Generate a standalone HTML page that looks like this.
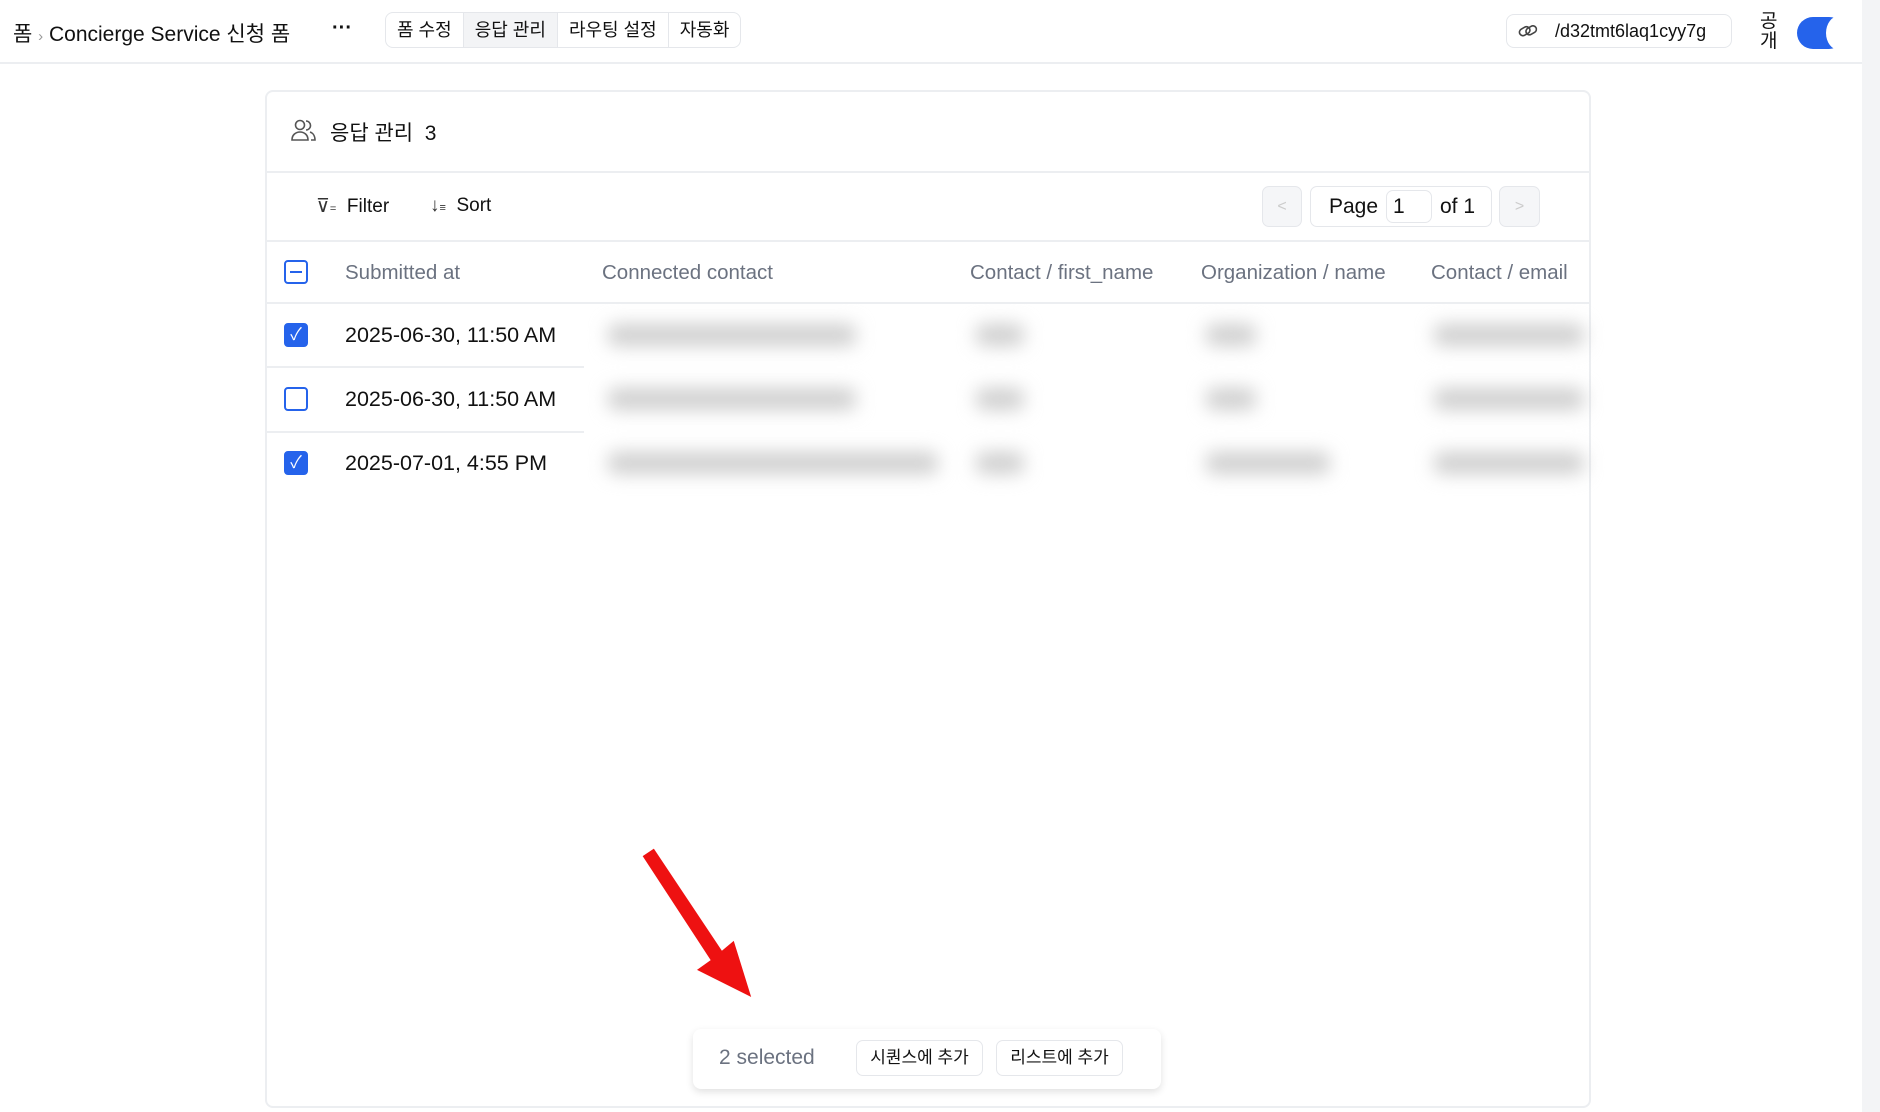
<!DOCTYPE html>
<html><head><meta charset="utf-8"><style>
*{box-sizing:border-box;margin:0;padding:0}
body{width:1880px;height:1112px;overflow:hidden;background:#fff;font-family:"Liberation Sans","Noto Sans CJK KR",sans-serif;color:#111;position:relative}
.abs{position:absolute}
.hdr{left:0;top:0;width:1862px;height:64px;border-bottom:2px solid #eceef1}
.rt{left:1862px;top:0;width:18px;height:1112px;background:#f3f4f6}
.tabs{left:385px;top:12px;height:36px;border:1px solid #e5e7eb;border-radius:8px;display:flex;overflow:hidden;font-size:18px}
.tabs div{padding:0 11px;line-height:34px;border-right:1px solid #e5e7eb}
.tabs div:last-child{border-right:none}
.card{left:265px;top:90px;width:1326px;height:1018px;border:2px solid #eceef1;border-radius:8px}
.hl{height:2px;background:#eceef1}
.th{font-size:20.5px;color:#6b7280;top:261px}
.td{font-size:21.5px;color:#111;left:345px}
.cb{width:24px;height:24px;border:2px solid #2563eb;border-radius:4px;left:284px}
.cbon{background:#2563eb;color:#fff;font-size:17px;text-align:center;line-height:20px}
.blur{background:#cfcfcf;filter:blur(9px);border-radius:8px;height:22px}
.btn{border:1px solid #e5e7eb;border-radius:7px;font-size:17px;text-align:center;line-height:34px;height:36px}
</style></head><body>
<div class="abs hdr"></div>
<div class="abs rt"></div>
<div class="abs" style="left:13px;top:18px;font-size:21px">폼 <span style="color:#999;font-size:15px">›</span> Concierge Service 신청 폼</div>
<div class="abs" style="left:332px;top:17px;font-size:20px;font-weight:bold">···</div>
<div class="abs tabs"><div>폼 수정</div><div style="background:#f3f4f6">응답 관리</div><div>라우팅 설정</div><div>자동화</div></div>
<div class="abs" style="left:1506px;top:14px;width:226px;height:34px;border:1px solid #e5e7eb;border-radius:8px;font-size:18px;line-height:32px;padding-left:48px">/d32tmt6laq1cyy7g</div>
<svg class="abs" style="left:1517px;top:21px" width="22" height="20" viewBox="0 0 22 20" fill="none" stroke="#444" stroke-width="1.6"><rect x="2" y="7" width="11" height="7" rx="3.5" transform="rotate(-30 7 10)"/><rect x="9" y="6" width="11" height="7" rx="3.5" transform="rotate(-30 14 10)"/></svg>
<div class="abs" style="left:1760px;top:12px;font-size:19px;line-height:20px;width:20px">공<br>개</div>
<div class="abs" style="left:1797px;top:17px;width:48px;height:32px;border-radius:16px;background:#2563eb"></div>
<div class="abs" style="left:1826px;top:16px;width:26px;height:34px;border-radius:50%;background:#fff"></div>

<div class="abs card"></div>
<svg class="abs" style="left:290px;top:118px" width="28" height="24" viewBox="0 0 28 24" fill="none" stroke="#555" stroke-width="1.6"><circle cx="10" cy="7" r="4.5"/><path d="M2 22c0-5 3.5-8 8-8s8 3 8 8z"/><path d="M16 3a4.5 4.5 0 0 1 0 9M20 14c3 1 5 4 5 8h-4"/></svg>
<div class="abs" style="left:330px;top:117px;font-size:21px">응답 관리&nbsp; 3</div>
<div class="abs hl" style="left:267px;top:171px;width:1322px"></div>
<div class="abs" style="left:316px;top:195px;font-size:19px;color:#333">⊽<span style="font-size:11px">=</span>&nbsp; <span style="color:#111">Filter</span></div>
<div class="abs" style="left:430px;top:195px;font-size:19px;color:#333">↓<span style="font-size:11px">≡</span>&nbsp; <span style="color:#111">Sort</span></div>
<div class="abs" style="left:1262px;top:186px;width:40px;height:41px;border:1px solid #e5e7eb;border-radius:7px;background:#f5f6f8;color:#ccc;text-align:center;line-height:39px">&lt;</div>
<div class="abs" style="left:1310px;top:186px;width:182px;height:41px;border:1px solid #e5e7eb;border-radius:7px;font-size:21px;line-height:39px;padding-left:18px">Page</div>
<div class="abs" style="left:1386px;top:190px;width:46px;height:33px;border:1px solid #e5e7eb;border-radius:7px;font-size:21px;line-height:31px;padding-left:6px">1</div>
<div class="abs" style="left:1440px;top:195px;font-size:21px">of 1</div>
<div class="abs" style="left:1499px;top:186px;width:41px;height:41px;border:1px solid #e5e7eb;border-radius:7px;background:#f5f6f8;color:#ccc;text-align:center;line-height:39px">&gt;</div>
<div class="abs hl" style="left:267px;top:240px;width:1322px"></div>

<div class="abs cb" style="top:260px"><div style="width:12px;height:2px;background:#2563eb;margin:9px auto"></div></div>
<div class="abs th" style="left:345px">Submitted at</div>
<div class="abs th" style="left:602px">Connected contact</div>
<div class="abs th" style="left:970px">Contact / first_name</div>
<div class="abs th" style="left:1201px">Organization / name</div>
<div class="abs th" style="left:1431px">Contact / email</div>
<div class="abs hl" style="left:267px;top:302px;width:1322px"></div>

<div class="abs cb cbon" style="top:323px">✓</div>
<div class="abs td" style="top:323px">2025-06-30, 11:50 AM</div>
<div class="abs" style="left:267px;top:366px;width:317px;height:2px;background:#eceef1"></div>
<div class="abs cb" style="top:387px"></div>
<div class="abs td" style="top:387px">2025-06-30, 11:50 AM</div>
<div class="abs" style="left:267px;top:431px;width:317px;height:2px;background:#eceef1"></div>
<div class="abs cb cbon" style="top:451px">✓</div>
<div class="abs td" style="top:451px">2025-07-01, 4:55 PM</div>

<div class="abs blur" style="left:608px;top:324px;width:248px"></div>
<div class="abs blur" style="left:976px;top:324px;width:48px"></div>
<div class="abs blur" style="left:1206px;top:324px;width:50px"></div>
<div class="abs blur" style="left:1434px;top:324px;width:150px"></div>
<div class="abs blur" style="left:608px;top:388px;width:248px"></div>
<div class="abs blur" style="left:976px;top:388px;width:48px"></div>
<div class="abs blur" style="left:1206px;top:388px;width:50px"></div>
<div class="abs blur" style="left:1434px;top:388px;width:150px"></div>
<div class="abs blur" style="left:608px;top:452px;width:330px"></div>
<div class="abs blur" style="left:976px;top:452px;width:48px"></div>
<div class="abs blur" style="left:1206px;top:452px;width:124px"></div>
<div class="abs blur" style="left:1434px;top:452px;width:150px"></div>

<svg class="abs" style="left:630px;top:840px" width="140" height="170" viewBox="0 0 140 170"><path d="M12 16 L24 8 L92 110 L104 100 L122 158 L66 130 L80 120 Z" fill="#ee1111" stroke="#fff" stroke-width="1"/></svg>

<div class="abs" style="left:693px;top:1029px;width:468px;height:60px;background:#fff;border-radius:8px;box-shadow:0 3px 8px rgba(0,0,0,.12)"></div>
<div class="abs" style="left:719px;top:1046px;font-size:21px;color:#6b7280">2 selected</div>
<div class="abs btn" style="left:856px;top:1040px;width:127px">시퀀스에 추가</div>
<div class="abs btn" style="left:996px;top:1040px;width:127px">리스트에 추가</div>
</body></html>
